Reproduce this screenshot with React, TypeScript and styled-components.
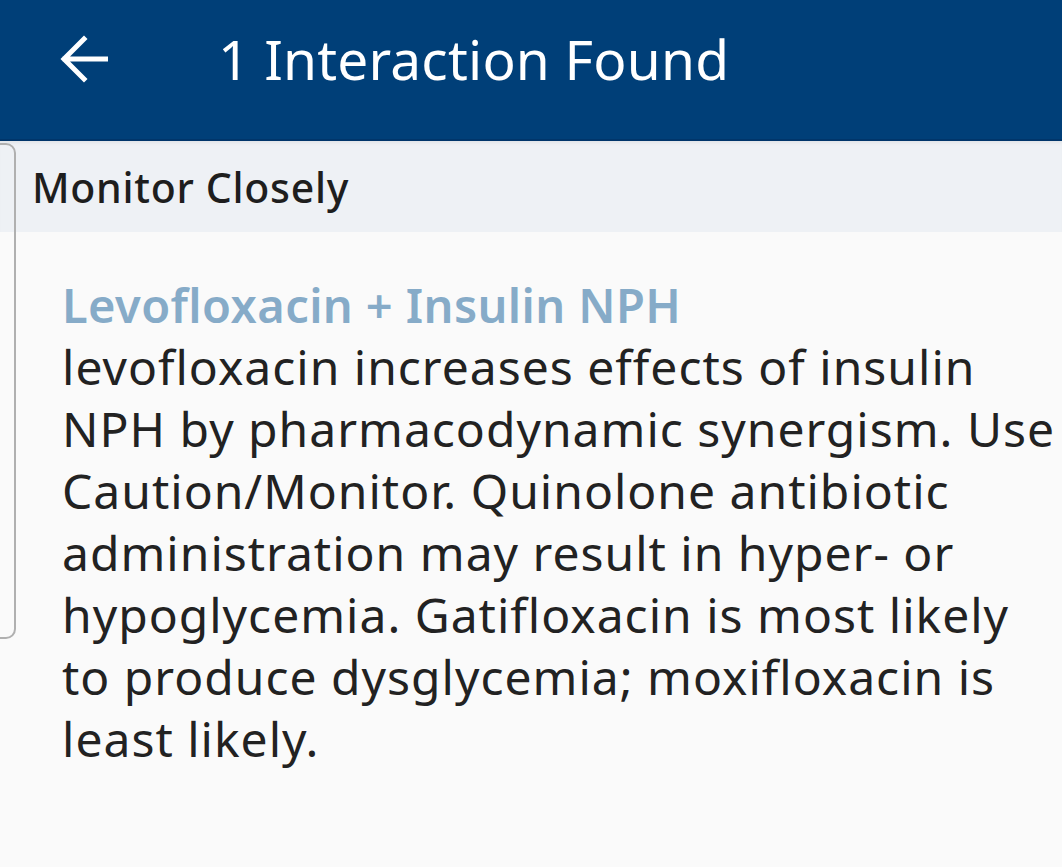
import * as React from 'react';
import styled, { createGlobalStyle } from 'styled-components';

const GlobalStyle = createGlobalStyle`
  html, body {
    margin: 0;
    padding: 0;
    background: #fafafa;
  }
  body {
    font-family: "Noto Sans", "Open Sans", sans-serif;
  }
`;

const Page = styled.div`
  position: relative;
  width: 1062px;
  min-height: 867px;
  background: #fafafa;
  overflow: hidden;
`;

const AppBar = styled.header`
  height: 141px;
  background: #003f78;
  border-bottom: 2px solid #00356a;
  box-sizing: border-box;
  display: flex;
  align-items: center;
  padding: 0 0 22px 58px;
  gap: 108px;
`;

const BackButton = styled.button`
  background: none;
  border: 0;
  padding: 0;
  width: 52px;
  height: 52px;
  display: flex;
  align-items: center;
  justify-content: center;
  color: #fff;
`;

const Title = styled.h1`
  margin: 0;
  color: #fff;
  font-size: 55px;
  font-weight: 400;
  letter-spacing: 0.2px;
`;

const SectionHeader = styled.div`
  height: 91px;
  background: #eef1f5;
  display: flex;
  align-items: center;
  padding-left: 32px;
  font-size: 41px;
  font-weight: 500;
  letter-spacing: 0.7px;
  color: #1e1e1e;
  box-shadow: inset 0 4px 4px -3px rgba(0, 0, 0, 0.08);
`;

const Body = styled.section`
  padding: 42px 2px 0 62px;
`;

const DrugPair = styled.div`
  color: #86abc8;
  font-size: 47px;
  font-weight: 600;
  letter-spacing: 0.4px;
  line-height: 62px;
`;

const Description = styled.p`
  margin: 0;
  color: #222;
  font-size: 48px;
  letter-spacing: 1px;
  line-height: 62px;
`;

const EdgeHandle = styled.div`
  position: absolute;
  left: -12px;
  top: 143px;
  width: 24px;
  height: 492px;
  border: 2px solid #b0b0b0;
  border-radius: 10px;
  background: transparent;
`;

export default function App() {
  return (
    <Page>
      <GlobalStyle />
      <AppBar>
        <BackButton aria-label="Back">
          <svg width="48" height="48" viewBox="0 0 48 48" fill="none">
            <path
              d="M46 24H5M24 4L4 24l20 20"
              stroke="#fff"
              strokeWidth="5"
              strokeLinecap="square"
            />
          </svg>
        </BackButton>
        <Title>1 Interaction Found</Title>
      </AppBar>
      <SectionHeader>Monitor Closely</SectionHeader>
      <Body>
        <DrugPair>Levofloxacin + Insulin NPH</DrugPair>
        <Description>
          levofloxacin increases effects of insulin NPH by pharmacodynamic
          synergism. Use Caution/Monitor. Quinolone antibiotic administration
          may result in hyper- or hypoglycemia. Gatifloxacin is most likely to
          produce dysglycemia; moxifloxacin is least likely.
        </Description>
      </Body>
      <EdgeHandle />
    </Page>
  );
}
